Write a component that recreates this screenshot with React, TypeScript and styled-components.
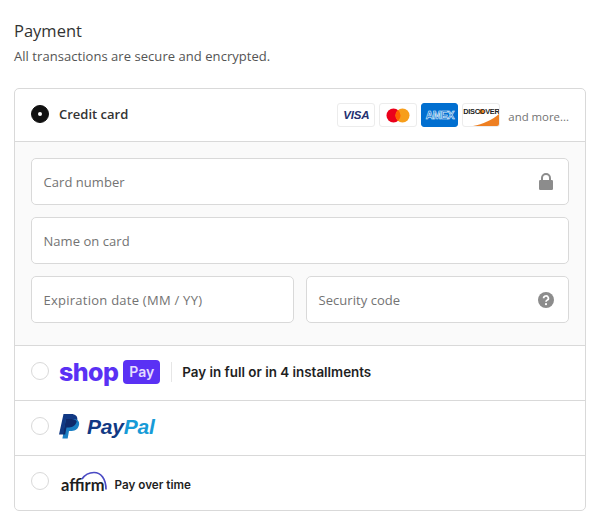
import React from "react";
import styled, { createGlobalStyle } from "styled-components";

const Global = createGlobalStyle`
  html, body { margin: 0; padding: 0; background: #fff; }
  body { font-family: "Open Sans", "Noto Sans", sans-serif; color: #333; }
`;

const Page = styled.div`
  width: 596px;
  height: 521px;
  box-sizing: border-box;
  padding: 19px 10px 0 14px;
  overflow: hidden;
`;
const Title = styled.h2`
  margin: 0;
  font-size: 16.5px;
  font-weight: 400;
  line-height: 24px;
  color: #333;
`;
const Subtitle = styled.p`
  margin: 3px 0 0;
  font-size: 13px;
  letter-spacing: 0.05px;
  line-height: 20px;
  color: #545454;
`;
const Card = styled.div`
  margin-top: 22px;
  width: 572px;
  box-sizing: border-box;
  border: 1px solid #d9d9d9;
  border-radius: 5px;
  overflow: hidden;
`;
const Row = styled.div<{ $h: number }>`
  height: ${(p) => p.$h}px;
  box-sizing: border-box;
  display: flex;
  align-items: center;
  padding: 0 16px;
  border-top: 1px solid #d9d9d9;
  &:first-child { border-top: 0; }
`;
const Radio = styled.span<{ $on?: boolean }>`
  width: 18px;
  height: 18px;
  flex: none;
  box-sizing: border-box;
  border-radius: 50%;
  background: ${(p) => (p.$on ? "#111" : "#fff")};
  border: 1px solid ${(p) => (p.$on ? "#111" : "#d9d9d9")};
  display: flex;
  align-items: center;
  justify-content: center;
  margin-top: ${(p) => (p.$on ? -2 : -4)}px;
  &::after {
    content: "";
    display: ${(p) => (p.$on ? "block" : "none")};
    width: 4px;
    height: 4px;
    border-radius: 50%;
    background: #fff;
  }
`;
const CardLabel = styled.span`
  margin-left: 10px;
  font-size: 13px;
  font-weight: 600;
  color: #333;
  flex: 1;
  margin-top: -3px;
`;
const Badges = styled.div`
  display: flex;
  gap: 4px;
  align-items: center;
`;
const Badge = styled.span<{ $bg?: string; $w?: number }>`
  position: relative;
  width: ${(p) => p.$w ?? 38}px;
  height: 24px;
  box-sizing: border-box;
  border-radius: 3px;
  border: 1px solid ${(p) => p.$bg ?? "#ececec"};
  background: ${(p) => p.$bg ?? "#fff"};
  display: flex;
  align-items: center;
  justify-content: center;
  overflow: hidden;
`;
const VisaText = styled.span`
  font-family: "Liberation Sans", sans-serif;
  font-size: 11.5px;
  font-weight: 700;
  font-style: italic;
  color: #232f6f;
  letter-spacing: -0.2px;
`;
const AmexText = styled.span`
  font-family: "Liberation Sans", sans-serif;
  font-size: 10.5px;
  font-weight: 700;
  color: #016fd0;
  letter-spacing: -0.5px;
  -webkit-text-stroke: 0.6px #e8f3fc;
`;
const DiscoverText = styled.span`
  font-family: "Liberation Sans", sans-serif;
  font-size: 7.4px;
  font-weight: 700;
  color: #222;
  letter-spacing: -0.3px;
  margin-top: -7px;
  position: relative;
  z-index: 1;
`;
const DiscoverSwoosh = styled.svg`
  position: absolute;
  right: 0;
  bottom: 0;
`;
const More = styled.span`
  margin: 2px 0 0 8px;
  font-size: 11.4px;
  color: #737373;
`;
const Panel = styled.div`
  height: 204px;
  box-sizing: border-box;
  background: #fafafa;
  border-top: 1px solid #d9d9d9;
  padding: 16px 16px 0;
  display: grid;
  grid-template-columns: 1fr 1fr;
  grid-auto-rows: 47px;
  gap: 12px;
`;
const Field = styled.div<{ $wide?: boolean }>`
  grid-column: ${(p) => (p.$wide ? "1 / -1" : "auto")};
  box-sizing: border-box;
  background: #fff;
  border: 1px solid #d9d9d9;
  border-radius: 5px;
  padding: 0 14px 0 11.5px;
  display: flex;
  align-items: center;
  justify-content: space-between;
  font-size: 13px;
  letter-spacing: 0.05px;
  color: #737373;
`;
const ExpiryLabel = styled.span`
  letter-spacing: 0.25px;
`;
const LockIcon = styled.svg`
  margin-right: 1px;
`;
const Logo = styled.div`
  display: flex;
  align-items: center;
  margin-left: 10px;
  margin-top: -3px;
`;
const ShopWord = styled.span`
  font-family: "Inter", sans-serif;
  font-size: 25px;
  font-weight: 800;
  line-height: 30px;
  color: #5a31f4;
  letter-spacing: -0.6px;
`;
const PayPill = styled.span`
  margin-left: 5px;
  width: 37px;
  height: 24px;
  border-radius: 4px;
  background: #5a31f4;
  color: #e4dcff;
  font-family: "Inter", sans-serif;
  font-size: 14px;
  font-weight: 600;
  display: flex;
  align-items: center;
  justify-content: center;
`;
const Divider = styled.span`
  width: 1px;
  height: 20px;
  margin: 0 10px 0 11px;
  background: #e6e6e6;
`;
const PromoText = styled.span`
  font-family: "Inter", sans-serif;
  font-size: 13.4px;
  font-weight: 600;
  color: #1f1f1f;
  margin-top: 1px;
  white-space: nowrap;
`;
const PayWord = styled.span<{ $c: string }>`
  font-family: "Liberation Sans", sans-serif;
  font-size: 21px;
  font-weight: 700;
  font-style: italic;
  letter-spacing: -0.2px;
  margin-top: 1px;
  color: ${(p) => p.$c};
`;
const PayPalMark = styled.svg`
  margin-right: 7px;
`;
const AffirmWrap = styled.span`
  position: relative;
  display: flex;
  margin: 6px 0 0 2px;
`;
const AffirmWord = styled.span`
  font-family: "Lato", sans-serif;
  font-size: 16.5px;
  font-weight: 700;
  color: #1f1f1f;
  line-height: 18px;
`;
const AffirmArc = styled.svg`
  position: absolute;
  left: 20px;
  top: -5px;
`;
const AffirmPromo = styled(PromoText)`
  font-size: 11.7px;
  margin: 6px 0 0 10px;
  line-height: 18px;
`;

export default function App() {
  return (
    <Page>
      <Global />
      <Title>Payment</Title>
      <Subtitle>All transactions are secure and encrypted.</Subtitle>
      <Card>
        <Row $h={52}>
          <Radio $on />
          <CardLabel>Credit card</CardLabel>
          <Badges>
            <Badge><VisaText>VISA</VisaText></Badge>
            <Badge>
              <svg width="24" height="15" viewBox="0 0 24 15">
                <circle cx="7.5" cy="7.5" r="7" fill="#eb001b" />
                <circle cx="16.5" cy="7.5" r="7" fill="#f79e1b" />
                <path d="M12 2.1a7 7 0 0 1 0 10.8a7 7 0 0 1 0-10.8z" fill="#ff5f00" />
              </svg>
            </Badge>
            <Badge $bg="#016fd0" $w={37}><AmexText>AMEX</AmexText></Badge>
            <Badge>
              <DiscoverText>DISCOVER</DiscoverText>
              <DiscoverSwoosh width="36" height="22" viewBox="0 0 36 22">
                <path d="M10 22C20 20 29 16 36 10V22z" fill="#ee7f22" />
                <circle cx="18.5" cy="7.5" r="2.6" fill="#f08a24" />
              </DiscoverSwoosh>
            </Badge>
          </Badges>
          <More>and more...</More>
        </Row>
        <Panel>
          <Field $wide>
            Card number
            <LockIcon width="14" height="17" viewBox="0 0 14 17">
              <path d="M3 8V5a4 4 0 0 1 8 0v3" fill="none" stroke="#8c8c8c" strokeWidth="2" />
              <rect x="0" y="7" width="14" height="10" rx="1.2" fill="#8c8c8c" />
            </LockIcon>
          </Field>
          <Field $wide>Name on card</Field>
          <Field><ExpiryLabel>Expiration date (MM / YY)</ExpiryLabel></Field>
          <Field>
            Security code
            <svg width="16" height="16" viewBox="0 0 16 16">
              <circle cx="8" cy="8" r="8" fill="#8c8c8c" />
              <path d="M5.6 6.2a2.4 2.2 0 1 1 3.6 1.9c-.8.5-1.2.9-1.2 1.7" fill="none" stroke="#fff" strokeWidth="1.7" />
              <circle cx="8" cy="12.2" r="1.1" fill="#fff" />
            </svg>
          </Field>
        </Panel>
        <Row $h={55}>
          <Radio />
          <Logo>
            <ShopWord>shop</ShopWord>
            <PayPill>Pay</PayPill>
            <Divider />
            <PromoText>Pay in full or in 4 installments</PromoText>
          </Logo>
        </Row>
        <Row $h={55}>
          <Radio />
          <Logo>
            <PayPalMark width="21" height="25" viewBox="0 0 21 25">
              <path d="M4.5 0h7.5c4.5 0 7 2.4 6.3 6.4c-.8 4.8-4 7-8.2 7H7.5L6.2 20.6H0z" fill="#113984" />
              <path d="M7 5h6.5c4.6 0 7.2 1.8 6.6 5.6c-.7 4.4-3.6 6.4-7.4 6.4H10l-1.3 7.6H3.4z" fill="#1b7fc4" />
              <path d="M7 5h5.5c3 0 4.6 1 5.2 2.6c-.9 3.9-3.7 5.8-7.6 5.8H7.5L6.2 20.6H3.9z" fill="#0f2a6b" />
            </PayPalMark>
            <PayWord $c="#113984">Pay</PayWord>
            <PayWord $c="#179bd7">Pal</PayWord>
          </Logo>
        </Row>
        <Row $h={55}>
          <Radio />
          <Logo>
            <AffirmWrap>
              <AffirmWord>affirm</AffirmWord>
              <AffirmArc width="27" height="20" viewBox="0 0 27 20">
                <path d="M1 8C4 3.5 9 1.5 13 1.5C20 1.5 25 8 25 18.5" fill="none" stroke="#4a4ac4" strokeWidth="1.7" />
              </AffirmArc>
            </AffirmWrap>
            <AffirmPromo>Pay over time</AffirmPromo>
          </Logo>
        </Row>
      </Card>
    </Page>
  );
}
